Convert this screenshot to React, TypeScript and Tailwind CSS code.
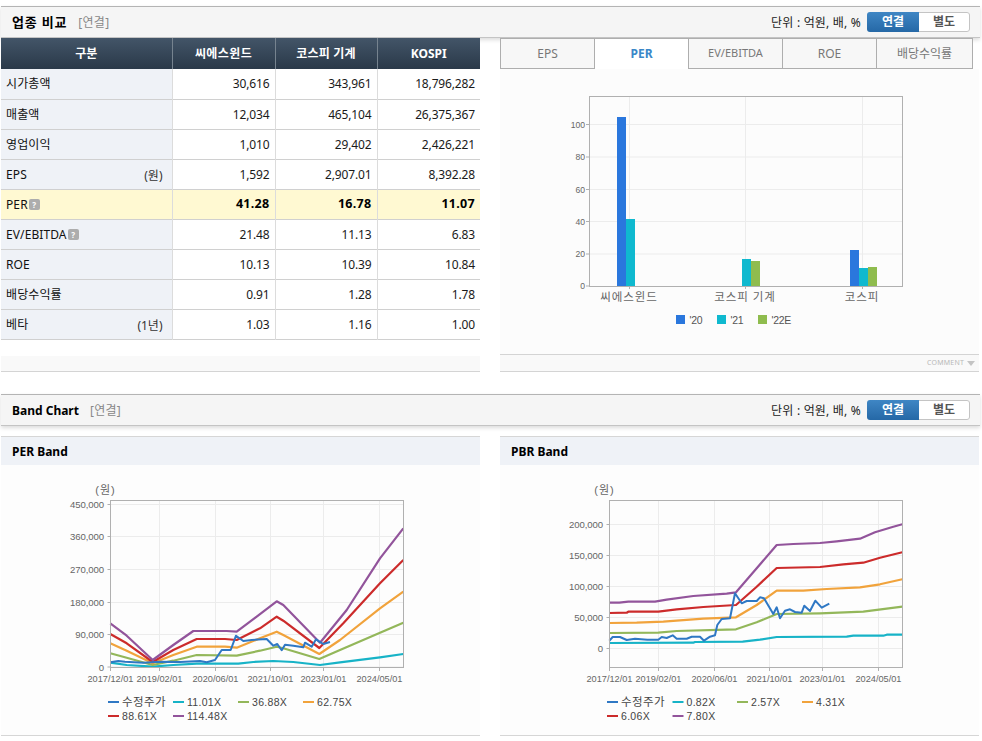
const rows = [
  { label: '시가총액', values: ['30,616', '343,961', '18,796,282'] },
  { label: '매출액', values: ['12,034', '465,104', '26,375,367'] },
  { label: '영업이익', values: ['1,010', '29,402', '2,426,221'] },
  { label: 'EPS', unit: '(원)', values: ['1,592', '2,907.01', '8,392.28'] },
  { label: 'PER', help: true, active: true, values: ['41.28', '16.78', '11.07'] },
  { label: 'EV/EBITDA', help: true, values: ['21.48', '11.13', '6.83'] },
  { label: 'ROE', values: ['10.13', '10.39', '10.84'] },
  { label: '배당수익률', values: ['0.91', '1.28', '1.78'] },
  { label: '베타', unit: '(1년)', values: ['1.03', '1.16', '1.00'] },
];

const tabs = ['EPS', 'PER', 'EV/EBITDA', 'ROE', '배당수익률'];

const COLORS = {
  blue: '#2f78c4',
  teal: '#17b3c7',
  green: '#93b75a',
  orange: '#f1a33c',
  red: '#cc2b2b',
  purple: '#92549b',
};

type Pt = [number, number];

// points are read off a 3x crop, so each chart passes the crop's origin
const toPoints = (pts: Pt[], ox: number, oy: number) =>
  pts.map(([x, y]) => `${(ox + x / 3).toFixed(1)},${(oy + y / 3).toFixed(1)}`).join(' ');

const perSeries: { color: string; width: number; pts: Pt[] }[] = [
  { color: COLORS.teal, width: 2.2, pts: [[151, 518], [200, 525], [278, 530], [340, 525], [410, 521], [535, 521], [580, 516], [640, 513], [700, 516], [780, 525], [840, 517], [960, 502], [1030, 492]] },
  { color: COLORS.green, width: 2.2, pts: [[151, 490], [200, 503], [278, 525], [340, 512], [410, 495], [530, 497], [600, 482], [650, 470], [670, 475], [778, 507], [840, 480], [960, 428], [1030, 398]] },
  { color: COLORS.orange, width: 2.2, pts: [[151, 460], [200, 482], [278, 520], [340, 495], [410, 470], [495, 470], [530, 473], [600, 445], [650, 425], [670, 435], [778, 492], [840, 450], [960, 355], [1030, 305]] },
  { color: COLORS.red, width: 2.2, pts: [[151, 432], [200, 460], [278, 516], [340, 480], [410, 447], [495, 447], [530, 450], [600, 415], [650, 380], [670, 392], [778, 474], [850, 400], [960, 280], [1030, 210]] },
  { color: COLORS.purple, width: 2.2, pts: [[151, 400], [200, 437], [278, 510], [340, 465], [400, 423], [500, 423], [530, 425], [590, 380], [650, 334], [670, 345], [780, 458], [860, 360], [960, 205], [1030, 115]] },
  { color: COLORS.blue, width: 2, pts: [[151, 517], [175, 513], [195, 515], [250, 518], [300, 515], [360, 516], [420, 513], [440, 517], [465, 510], [485, 480], [512, 480], [528, 437], [550, 453], [575, 450], [620, 447], [640, 467], [652, 462], [665, 481], [675, 464], [700, 467], [730, 472], [735, 458], [755, 470], [768, 448], [790, 462], [810, 456]] },
];

const pbrSeries: { color: string; width: number; pts: Pt[] }[] = [
  { color: COLORS.teal, width: 2.2, pts: [[148, 459], [400, 458], [405, 456], [548, 455], [600, 449], [650, 441], [860, 440], [880, 437], [970, 437], [980, 434], [1027, 434]] },
  { color: COLORS.green, width: 2.2, pts: [[148, 429], [295, 428], [350, 423], [500, 419], [528, 418], [590, 397], [650, 372], [780, 370], [910, 365], [1027, 350]] },
  { color: COLORS.orange, width: 2.2, pts: [[148, 399], [230, 398], [310, 395], [430, 386], [528, 382], [590, 345], [650, 302], [730, 302], [800, 297], [900, 292], [960, 283], [1027, 268]] },
  { color: COLORS.red, width: 2.2, pts: [[148, 369], [200, 368], [205, 365], [295, 365], [350, 358], [430, 351], [528, 345], [590, 290], [650, 234], [780, 231], [850, 223], [910, 218], [960, 203], [1027, 187]] },
  { color: COLORS.purple, width: 2.2, pts: [[148, 338], [178, 338], [205, 335], [285, 335], [320, 329], [400, 318], [500, 311], [528, 307], [590, 235], [650, 165], [700, 162], [780, 159], [830, 154], [900, 146], [945, 127], [1000, 110], [1027, 103]] },
  { color: COLORS.blue, width: 2, pts: [[148, 452], [158, 441], [180, 441], [200, 450], [225, 446], [262, 449], [295, 449], [305, 441], [320, 444], [338, 436], [350, 446], [380, 446], [395, 440], [420, 440], [432, 452], [450, 440], [465, 436], [472, 405], [485, 387], [510, 385], [525, 310], [545, 340], [560, 333], [590, 333], [600, 322], [612, 325], [640, 372], [650, 352], [660, 385], [675, 362], [690, 358], [705, 366], [725, 368], [733, 347], [750, 363], [766, 332], [785, 353], [808, 341]] },
];

const dates = ['2017/12/01', '2019/02/01', '2020/06/01', '2021/10/01', '2023/01/01', '2024/05/01'];

function SectionBar({ title, korean }: { title: string; korean?: boolean }) {
  return (
    <div className="relative ml-px flex h-8 w-[979px] items-center border-t border-b border-t-[#b4b4b4] border-b-[#c4c4c4] bg-[#f5f5f5] pr-[10px] pl-[11px] shadow-[0_2px_4px_rgba(0,0,0,0.14)]">
      <span className={`pt-px font-bold text-black ${korean ? 'text-[13px] tracking-[0.8px]' : 'text-[12px]'}`}>{title}</span>
      <span className="ml-[11px] pt-px text-[12px] tracking-[0.3px] text-[#888]">[연결]</span>
      <span className="mr-[6px] ml-auto pt-px text-[12px] tracking-[0.2px] text-[#222]">단위 : 억원, 배, %</span>
      <div className="flex h-[20px] w-[103px] overflow-hidden rounded-[3px] text-[12px] font-bold">
        <span className="flex w-[52px] items-center justify-center bg-gradient-to-b from-[#3f86c4] to-[#2568a6] text-white">연결</span>
        <span className="flex flex-1 items-center justify-center rounded-r-[3px] border border-l-0 border-[#c4c4c4] bg-white text-[#555]">별도</span>
      </div>
    </div>
  );
}

function HelpIcon() {
  return (
    <span className="ml-px inline-flex h-[11px] w-[11px] items-center justify-center rounded-[2px] bg-[#adadad] text-[8px] leading-none font-bold text-white">?</span>
  );
}

function CompareTable() {
  return (
    <table className="w-[479px] table-fixed border-collapse text-[12px]">
      <thead>
        <tr className="h-[31px] bg-gradient-to-b from-[#435568] to-[#2a3949] text-white">
          <th className="w-[171px] border-r border-[#76838f] font-bold">구분</th>
          <th className="w-[103px] border-r border-[#76838f] font-bold tracking-[0.4px]">씨에스윈드</th>
          <th className="w-[102px] border-r border-[#76838f] font-bold tracking-[0.2px]">코스피 기계</th>
          <th className="w-[103px] font-bold">KOSPI</th>
        </tr>
      </thead>
      <tbody>
        {rows.map((row) => (
          <tr key={row.label} className={`h-[30px] border-b border-[#d0d0d0] ${row.active ? 'bg-[#fff9d2]' : ''}`}>
            <td className={`border-r border-[#dcdcdc] pt-px pr-[9px] pl-[5px] text-[#111] ${row.active ? '' : 'bg-[#eff2f7]'}`}>
              <div className="flex items-center">
                <span className="tracking-[0.1px]">{row.label}</span>
                {row.help && <HelpIcon />}
                {row.unit && <span className="ml-auto pt-[3px] text-[#333]">{row.unit}</span>}
              </div>
            </td>
            {row.values.map((value, i) => (
              <td
                key={i}
                className={`pt-px pr-[5px] text-right tracking-[-0.15px] text-[#1a1a1a] ${i < 2 ? 'border-r border-[#dcdcdc]' : ''} ${row.active ? 'text-[12.5px] font-bold tracking-[0.3px] text-black' : ''}`}
              >
                {value}
              </td>
            ))}
          </tr>
        ))}
      </tbody>
    </table>
  );
}

function Tabs() {
  return (
    <div className="flex h-[31px] w-[473px] text-[12px]">
      {tabs.map((tab, i) => (
        <div
          key={tab}
          className={`flex items-center justify-center border-t border-l border-[#aeaeae] ${i === 4 ? 'w-[97px] border-r' : 'w-[94px]'} ${
            tab === 'PER' ? 'bg-white font-bold text-[#3a87c8]' : 'border-b bg-[#f7f7f7] text-[#777]'
          } ${tab === 'EV/EBITDA' ? 'text-[11px]' : ''}`}
        >
          {tab}
        </div>
      ))}
    </div>
  );
}

function PerBarChart() {
  const ticks: [string, number][] = [['100', 124.5], ['80', 157], ['60', 189.5], ['40', 221.5], ['20', 254], ['0', 286]];
  const bars = [
    { x: 617, top: 117, fill: '#2a77dd' },
    { x: 626, top: 219, fill: '#0fb9cf' },
    { x: 742, top: 259, fill: '#0fb9cf' },
    { x: 751, top: 261, fill: '#8fbc4e' },
    { x: 850, top: 250, fill: '#2a77dd' },
    { x: 859, top: 268, fill: '#0fb9cf' },
    { x: 868, top: 267, fill: '#8fbc4e' },
  ];
  const labels: [string, number][] = [['씨에스윈드', 629], ['코스피 기계', 745], ['코스피', 862]];
  const legend: [string, number, string][] = [["'20", 676, '#2a77dd'], ["'21", 717, '#0fb9cf'], ["'22E", 758, '#8fbc4e']];
  return (
    <svg className="block" width="479" height="285" viewBox="500 69 479 285" fontFamily="'Liberation Sans','Noto Sans CJK KR',sans-serif">
      {ticks.slice(0, -1).map(([, y]) => (
        <line key={y} x1="589.5" x2="902.5" y1={y} y2={y} stroke="#ececec" />
      ))}
      {[629.5, 745.5, 862.5].map((x) => (
        <line key={x} x1={x} x2={x} y1="97" y2="286" stroke="#ececec" />
      ))}
      {bars.map((b) => (
        <rect key={b.x} x={b.x} y={b.top} width="9" height={286 - b.top} fill={b.fill} />
      ))}
      <rect x="589.5" y="96.5" width="313" height="190" fill="none" stroke="#b0b0b0" />
      {ticks.map(([t, y]) => (
        <g key={t}>
          <line x1="586" x2="589.5" y1={y} y2={y} stroke="#b0b0b0" />
          <text x="585" y={y + 3} textAnchor="end" fontSize="8.6" fill="#666">{t}</text>
        </g>
      ))}
      {labels.map(([t, x]) => (
        <g key={t}>
          <line x1={x + 0.5} x2={x + 0.5} y1="286" y2="289" stroke="#b0b0b0" />
          <text x={x} y="301" textAnchor="middle" fontSize="11.5" letterSpacing="0.9" fill="#666">{t}</text>
        </g>
      ))}
      {legend.map(([t, x, c]) => (
        <g key={t}>
          <rect x={x} y="315" width="9" height="9" fill={c} />
          <text x={x + 13.5} y="324" fontSize="10.5" letterSpacing="-0.3" fill="#555">{t}</text>
        </g>
      ))}
    </svg>
  );
}

function BandChart({
  vb,
  ox,
  plotX,
  plotW,
  ticks,
  gridX,
  series,
  legend,
}: {
  vb: string;
  ox: number;
  plotX: number;
  plotW: number;
  ticks: [string, number][];
  gridX: number[];
  series: { color: string; width: number; pts: Pt[] }[];
  legend: [string, string, number, number][];
}) {
  return (
    <svg className="block" width="479" height="270" viewBox={vb} fontFamily="'Liberation Sans','Noto Sans CJK KR',sans-serif">
      {ticks.map(([t, y]) => (
        <line key={t} x1={plotX} x2={plotX + plotW} y1={y} y2={y} stroke="#ececec" />
      ))}
      {gridX.map((x) => (
        <line key={x} x1={x} x2={x} y1="500.5" y2="667" stroke="#ececec" />
      ))}
      <text x={plotX - 5} y="494" textAnchor="middle" fontSize="11" letterSpacing="1" fill="#666">(원)</text>
      {series.map((s) => (
        <polyline key={s.color} points={toPoints(s.pts, ox, 490)} fill="none" stroke={s.color} strokeWidth={s.width} strokeLinejoin="round" />
      ))}
      <rect x={plotX} y="500.5" width={plotW} height="167" fill="none" stroke="#b0b0b0" />
      {ticks.map(([t, y]) => (
        <g key={t}>
          <line x1={plotX - 3} x2={plotX} y1={y} y2={y} stroke="#b0b0b0" />
          <text x={plotX - 6.5} y={y + 3.5} textAnchor="end" fontSize="9.6" letterSpacing="-0.1" fill="#666">{t}</text>
        </g>
      ))}
      {[plotX, ...gridX].map((x, i) => (
        <g key={x}>
          <line x1={x} x2={x} y1="667" y2="671" stroke="#b0b0b0" />
          <text x={x} y="682" textAnchor="middle" fontSize="9.2" fill="#666">{dates[i]}</text>
        </g>
      ))}
      {legend.map(([t, c, x, y]) => (
        <g key={t}>
          <line x1={x} x2={x + 11} y1={y} y2={y} stroke={c} strokeWidth="2" />
          <text x={x + 14} y={y + 4} fontSize={t === '수정주가' ? 11.5 : 10.5} letterSpacing={t === '수정주가' ? 0.4 : 0.3} fill="#444">{t}</text>
        </g>
      ))}
    </svg>
  );
}

function BandPanel({ title, children }: { title: string; children: React.ReactNode }) {
  return (
    <div className="w-[479px]">
      <div className="flex h-[29px] items-center border-t border-[#d6d6d6] bg-[#eff2f7] pt-[2px] pl-[11px] text-[12px] font-bold text-black">{title}</div>
      <div className="h-[271px] border-b border-[#d6d6d6] bg-[#fdfdfd]">{children}</div>
    </div>
  );
}

export default function App() {
  return (
    <div className="h-[741px] w-[982px] overflow-hidden bg-white pt-[6px] font-['Noto_Sans','Noto_Sans_CJK_KR',sans-serif]">
      <SectionBar title="업종 비교" korean />

      <div className="relative ml-px flex w-[979px] gap-[20px]">
        <div className="w-[479px]">
          <CompareTable />
          <div className="mt-[16px] h-[16px] border-b border-[#d4d4d4] bg-[#f9f9f9]" />
        </div>
        <div className="w-[479px]">
          <Tabs />
          <div className="bg-[#fcfcfc]">
            <PerBarChart />
          </div>
          <div className="flex h-[18px] items-center justify-end gap-[3px] border-y border-[#d4d4d4] bg-[#f9f9f9] pr-[4px]">
            <span className="text-[7px] tracking-[0.2px] text-[#b8b8b8] uppercase">comment</span>
            <span className="h-0 w-0 border-x-[4.5px] border-t-[5px] border-x-transparent border-t-[#c4c4c4]" />
          </div>
        </div>
      </div>

      <div className="mt-[22px]">
        <SectionBar title="Band Chart" />
      </div>

      <div className="relative ml-px mt-[10px] flex w-[979px] gap-[20px]">
        <BandPanel title="PER Band">
          <BandChart
            vb="1 465 479 270"
            ox={60}
            plotX={110.5}
            plotW={293}
            ticks={[['450,000', 504.5], ['360,000', 536.5], ['270,000', 569.5], ['180,000', 602.5], ['90,000', 634.5], ['0', 667]]}
            gridX={[159.5, 215.5, 270.5, 323.5, 379.5]}
            series={perSeries}
            legend={[
              ['수정주가', COLORS.blue, 108, 702],
              ['11.01X', COLORS.teal, 173, 702],
              ['36.88X', COLORS.green, 238, 702],
              ['62.75X', COLORS.orange, 303, 702],
              ['88.61X', COLORS.red, 108, 716],
              ['114.48X', COLORS.purple, 173, 716],
            ]}
          />
        </BandPanel>
        <BandPanel title="PBR Band">
          <BandChart
            vb="500 465 479 270"
            ox={560}
            plotX={609.5}
            plotW={293}
            ticks={[['200,000', 524.5], ['150,000', 555.5], ['100,000', 586.5], ['50,000', 617.5], ['0', 648.5]]}
            gridX={[658.5, 714.5, 769.5, 822.5, 878.5]}
            series={pbrSeries}
            legend={[
              ['수정주가', COLORS.blue, 607, 702],
              ['0.82X', COLORS.teal, 672.5, 702],
              ['2.57X', COLORS.green, 737, 702],
              ['4.31X', COLORS.orange, 802, 702],
              ['6.06X', COLORS.red, 607, 716],
              ['7.80X', COLORS.purple, 672.5, 716],
            ]}
          />
        </BandPanel>
      </div>
    </div>
  );
}
